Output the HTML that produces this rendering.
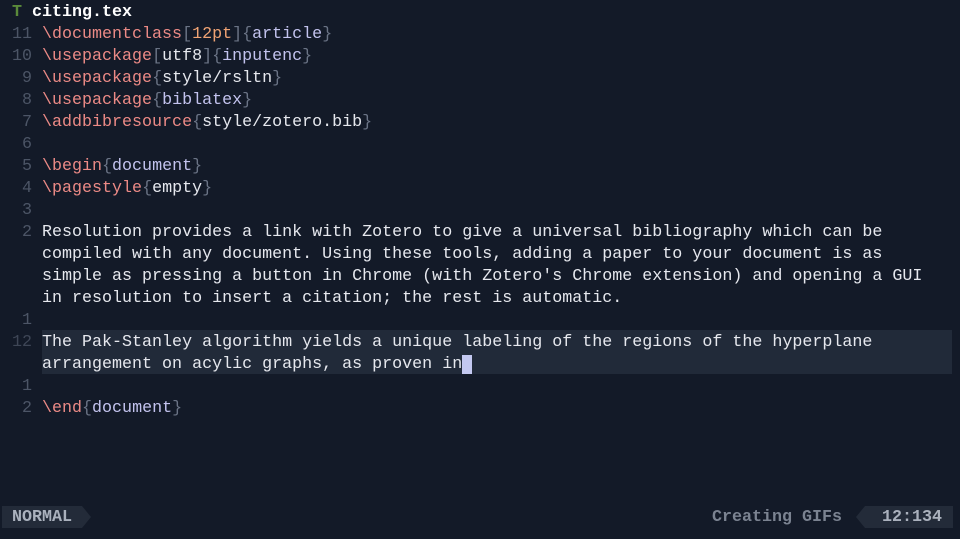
<!DOCTYPE html><html><head><style>
body{margin:0;width:960px;height:539px;background:#131a28;overflow:hidden;font-family:"Liberation Mono",monospace;font-size:16.68px;color:#e6e8ee}
.r{position:absolute;left:0;height:22px;line-height:22px;white-space:pre;margin-top:1px}
.n{position:absolute;left:0;width:32px;text-align:right;color:#4c5566}
.t{position:absolute;left:42px}
.c{color:#ec8a86}.b{color:#6a7385}.a{color:#c3c3ee}.o{color:#f0a374}
.hl{position:absolute;left:42px;top:330px;width:910px;height:44px;background:#212a39}
.s{font-weight:bold;margin-top:0}
</style></head><body>
<div class="hl"></div>
<div class="r" style="top:1px"><span style="position:absolute;left:12px;color:#5a8a3a;font-weight:bold">T</span><span style="position:absolute;left:32px;font-weight:bold;color:#fff">citing.tex</span></div>
<div class="r" style="top:23px"><span class="n">11</span><span class="t"><span class="c">\documentclass</span><span class="b">[</span><span class="o">12pt</span><span class="b">]{</span><span class="a">article</span><span class="b">}</span></span></div>
<div class="r" style="top:45px"><span class="n">10</span><span class="t"><span class="c">\usepackage</span><span class="b">[</span>utf8<span class="b">]{</span><span class="a">inputenc</span><span class="b">}</span></span></div>
<div class="r" style="top:67px"><span class="n">9</span><span class="t"><span class="c">\usepackage</span><span class="b">{</span>style/rsltn<span class="b">}</span></span></div>
<div class="r" style="top:89px"><span class="n">8</span><span class="t"><span class="c">\usepackage</span><span class="b">{</span><span class="a">biblatex</span><span class="b">}</span></span></div>
<div class="r" style="top:111px"><span class="n">7</span><span class="t"><span class="c">\addbibresource</span><span class="b">{</span>style/zotero.bib<span class="b">}</span></span></div>
<div class="r" style="top:133px"><span class="n">6</span></div>
<div class="r" style="top:155px"><span class="n">5</span><span class="t"><span class="c">\begin</span><span class="b">{</span><span class="a">document</span><span class="b">}</span></span></div>
<div class="r" style="top:177px"><span class="n">4</span><span class="t"><span class="c">\pagestyle</span><span class="b">{</span>empty<span class="b">}</span></span></div>
<div class="r" style="top:199px"><span class="n">3</span></div>
<div class="r" style="top:221px"><span class="n">2</span><span class="t">Resolution provides a link with Zotero to give a universal bibliography which can be</span></div>
<div class="r" style="top:243px"><span class="t">compiled with any document. Using these tools, adding a paper to your document is as</span></div>
<div class="r" style="top:265px"><span class="t">simple as pressing a button in Chrome (with Zotero's Chrome extension) and opening a GUI</span></div>
<div class="r" style="top:287px"><span class="t">in resolution to insert a citation; the rest is automatic.</span></div>
<div class="r" style="top:309px"><span class="n">1</span></div>
<div class="r" style="top:331px"><span class="n" style="color:#3e4656">12</span><span class="t">The Pak-Stanley algorithm yields a unique labeling of the regions of the hyperplane</span></div>
<div class="r" style="top:353px"><span class="t">arrangement on acylic graphs, as proven in<span style="background:#c3c8f0">&nbsp;</span></span></div>
<div class="r" style="top:375px"><span class="n">1</span></div>
<div class="r" style="top:397px"><span class="n">2</span><span class="t"><span class="c">\end</span><span class="b">{</span><span class="a">document</span><span class="b">}</span></span></div>
<div style="position:absolute;left:2px;top:506px;width:80px;height:22px;background:#232b39"></div>
<div style="position:absolute;left:82px;top:506px;width:0;height:0;border-top:11px solid transparent;border-bottom:11px solid transparent;border-left:9px solid #232b39"></div>
<div class="r s" style="top:507px;left:12px;color:#aab1bd">NORMAL</div>
<div class="r s" style="top:507px;left:712px;color:#7b8391">Creating GIFs</div>
<div style="position:absolute;left:856px;top:506px;width:0;height:0;border-top:11px solid transparent;border-bottom:11px solid transparent;border-right:9px solid #232b39"></div>
<div style="position:absolute;left:865px;top:506px;width:88px;height:22px;background:#232b39"></div>
<div class="r s" style="top:507px;left:882px;color:#aab1bd">12:134</div>
</body></html>
